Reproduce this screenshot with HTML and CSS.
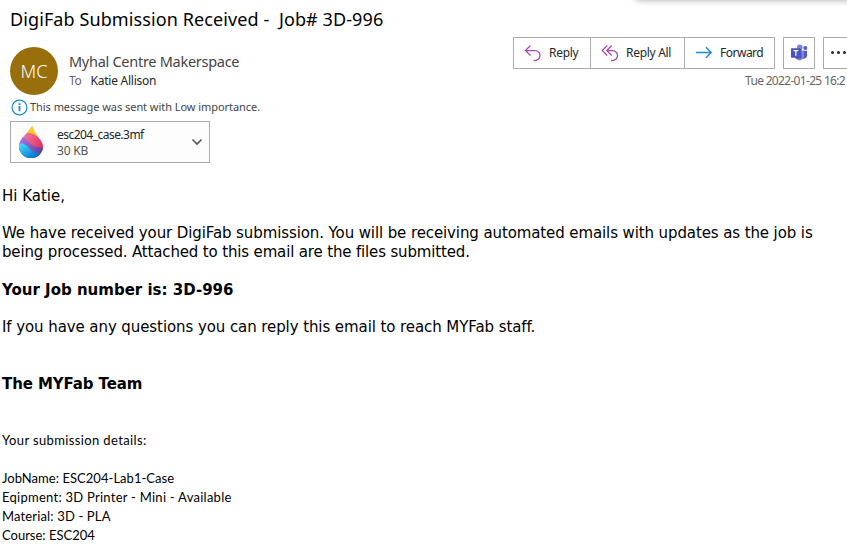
FILE: index.html
```html
<!DOCTYPE html>
<html lang="en">
<head>
<meta charset="utf-8">
<title>DigiFab Submission Received</title>
<link rel="stylesheet" href="styles.css">
</head>
<body>
<div class="top-shadow"></div>
<main class="message">
  <h1 class="subject"><span>DigiFab Submission Received -&nbsp; Job# 3D-996</span></h1>
  <header class="header">
    <div class="sender">
      <div class="avatar">MC</div>
      <div class="people">
        <div class="from"><span>Myhal Centre Makerspace</span></div>
        <div class="to"><span class="to-label">To</span><span class="to-name">Katie Allison</span></div>
      </div>
    </div>
    <div class="side">
      <div class="actions">
        <div class="group">
          <button class="btn reply"><svg width="18" height="18" viewBox="0 0 18 18" fill="none" stroke="#ac46b3" stroke-width="1.25"><path d="M6.5 1.500 1.500 6.500l5 5M1.800 6.500H11a5 5 0 0 1 0 10H9.500"/></svg><span>Reply</span></button>
          <button class="btn reply-all"><svg width="18" height="18" viewBox="0 0 18 18" fill="none" stroke="#ac46b3" stroke-width="1.25"><path d="M6.3 1.500 1.300 6.500l5 5M10.700 1.500l-5 5 5 5M6 6.500h5.500a5 5 0 0 1 0 10H10"/></svg><span>Reply All</span></button>
          <button class="btn forward"><svg width="18" height="18" viewBox="0 0 18 18" fill="none" stroke="#1e8bcd" stroke-width="1.4"><path d="M1 8.500h15M11 3.200 16.200 8.500 11 13.800"/></svg><span>Forward</span></button>
        </div>
        <button class="btn square" aria-label="Share to Teams"><svg width="18" height="18" viewBox="0 0 18 18"><circle cx="15.3" cy="4" r="2" fill="#5059c9"/><path d="M11 6.700h6v5a3 3 0 0 1-4.500 2.500z" fill="#5059c9"/><circle cx="9.800" cy="3.400" r="2.800" fill="#7b83eb"/><path d="M5 6.700h9v5.200a4.500 4.500 0 0 1-9 0z" fill="#7b83eb"/><path d="M5 5h6.500v9.500H5.400z" fill="#353c91" opacity=".65"/><rect x="1" y="4.200" width="9.600" height="9.600" rx=".8" fill="#4b53bc"/><path d="M3.500 6.600h4.800M5.900 6.600v5.200" stroke="#fff" stroke-width="1.200"/></svg></button>
        <button class="btn square" aria-label="More"><svg width="18" height="18" viewBox="0 0 18 18" fill="#262626"><circle cx="2.500" cy="8.500" r="1.500"/><circle cx="8.500" cy="8.500" r="1.500"/><circle cx="14.500" cy="8.500" r="1.500"/></svg></button>
      </div>
      <div class="date"><span>Tue 2022-01-25 16:2</span></div>
    </div>
  </header>
  <div class="notice">
    <svg width="17" height="17" viewBox="0 0 17 17"><circle cx="8.500" cy="8.500" r="7.400" fill="#fff" stroke="#1e8bcd" stroke-width="1.200"/><path d="M8.500 7v5.200M8.500 4.300v1.800" stroke="#1e8bcd" stroke-width="1.800"/></svg>
    <span>This message was sent with Low importance.</span>
  </div>
  <div class="attachment">
    <svg class="drop" width="26" height="34" viewBox="0 0 26 34">
      <defs>
        <linearGradient id="blue" x1="0" y1="0" x2="1" y2="1"><stop offset="0" stop-color="#50e6ff"/><stop offset=".75" stop-color="#0078d4"/></linearGradient>
        <linearGradient id="pink" x1="0" y1="0" x2="1" y2=".6"><stop offset=".25" stop-color="#ed7eaa"/><stop offset="1" stop-color="#e62b58"/></linearGradient>
        <linearGradient id="violet" x1="0" y1="0" x2="1" y2=".6"><stop offset=".2" stop-color="#a070dc"/><stop offset="1" stop-color="#56419c"/></linearGradient>
        <clipPath id="shape"><path d="M14.200 1C11.500 7 1 13 1 21.500a12 11.500 0 0 0 24 0C25 14.500 16.500 11 14.200 1z"/></clipPath>
      </defs>
      <g clip-path="url(#shape)">
        <path fill="url(#pink)" d="M0 0h26v34H0z"/>
        <path fill="#ffce09" d="M9 0h8l3 12C16 9 13 7.500 9 8z"/>
        <path fill="url(#violet)" d="M0 12C6 10.500 9 15 13 19s8 2.500 13 4V34H0z"/>
        <path fill="url(#blue)" d="M0 18.500C6 18 9 20 12 24s7 4 13 5V34H0z"/>
      </g>
    </svg>
    <div class="file"><div class="file-name"><span>esc204_case.3mf</span></div><div class="file-size"><span>30 KB</span></div></div>
    <svg class="chevron" width="12" height="8" viewBox="0 0 12 8" fill="none" stroke="#555" stroke-width="1.600"><path d="m1.500 1.500 4.500 4.500 4.500-4.500"/></svg>
  </div>
  <article class="body">
    <p><span>Hi Katie,</span></p>
    <p class="intro"><span>We have received your DigiFab submission. You will be receiving automated emails with updates as the job is</span><br><span class="intro-end">being processed. Attached to this email are the files submitted.</span></p>
    <p class="strong"><span>Your Job number is: 3D-996</span></p>
    <p class="contact"><span>If you have any questions you can reply this email to reach MYFab staff.</span></p>
    <p class="strong team"><span>The MYFab Team</span></p>
    <div class="details">
      <div class="details-title"><span>Your submission details:</span></div>
      <div class="job"><span>JobName: ESC204-Lab1-Case</span></div>
      <div class="equipment"><span>Eqipment: 3D Printer - Mini - Available</span></div>
      <div class="material"><span>Material: 3D - PLA</span></div>
      <div class="course"><span>Course: ESC204</span></div>
    </div>
  </article>
</main>
</body>
</html>
```
FILE: styles.css
```css
* { box-sizing: border-box; }
html, body { margin: 0; background: #fff; overflow: hidden; }
body { width: 847px; height: 560px; font-family: "Noto Sans", sans-serif; color: #262626; }
.top-shadow { position: absolute; left: 634px; top: -10px; width: 230px; height: 10px; border-radius: 8px; box-shadow: 0 0 6px rgba(0, 0, 0, .35); }
.message { white-space: nowrap; }
.subject { margin: 0; height: 37px; padding: 6px 0 0 10px; font-size: 18px; line-height: 26px; font-weight: 400; color: #000; letter-spacing: .1px; }
.header { display: flex; height: 60px; }
.sender { display: flex; width: 513px; padding: 10px 0 0 10px; }
.avatar { width: 48px; height: 48px; border-radius: 50%; background: #986f0b; color: #fff; font-size: 18px; font-weight: 300; line-height: 49px; text-align: center; }
.people { padding: 4px 0 0 11px; }
.from { font-size: 14.500px; line-height: 20px; color: #444; letter-spacing: -.28px; }
.to { display: flex; gap: 9px; padding-top: 1px; font-size: 12px; line-height: 18px; letter-spacing: -.25px; }
.to-label { color: #666; }
.side { width: 334px; overflow: hidden; }
.actions { display: flex; gap: 8px; width: 342px; }
.group { display: flex; width: 262px; border: 1px solid #ababab; }
.btn { display: flex; align-items: center; height: 30px; padding: 0; border: 0; background: #fff; font: 12px/18px "Noto Sans", sans-serif; color: #262626; letter-spacing: -.3px; }
.btn svg { flex: none; }
.group .btn { gap: 7px; padding-left: 10px; }
.reply { width: 77px; border-right: 1px solid #ababab; }
.reply-all { width: 94px; border-right: 1px solid #ababab; }
.forward { width: 89px; }
.group .forward { letter-spacing: -.5px; }
.btn.square { width: 32px; height: 32px; border: 1px solid #ababab; justify-content: center; }
.date { padding-left: 232px; padding-top: 3px; font-size: 12px; line-height: 18px; color: #666; letter-spacing: -.68px; }
.notice { display: flex; align-items: center; gap: 2px; height: 20px; padding-left: 11px; font-size: 11px; line-height: 16px; color: #444; letter-spacing: -.05px; }
.notice span { margin-bottom: 1px; }
.attachment { display: flex; align-items: center; width: 200px; height: 42px; margin: 4px 0 0 10px; border: 1px solid #ababab; background: #fdfdfd; }
.drop { margin-left: 7px; }
.file { width: 134px; margin-left: 13px; padding-top: 2px; font-size: 12px; line-height: 16px; letter-spacing: -.2px; }
.file-name { letter-spacing: -.53px; }
.file-size { color: #555; }
.body { padding: 24px 0 0 2px; font-family: "DejaVu Sans", Verdana, sans-serif; font-size: 15px; line-height: 19px; color: #000; }
.body p { margin: 0 0 18px; }
.body .intro { margin-bottom: 19px; letter-spacing: -.105px; }
.intro-end { letter-spacing: -.155px; }
.contact { letter-spacing: -.085px; }
.body .strong { font-weight: 700; }
.body .team { margin: 38px 0 0; letter-spacing: -.1px; }
.details { padding-top: 37px; font-family: Lato, sans-serif; font-size: 13px; }
.details-title { margin-bottom: 19px; letter-spacing: .37px; }
.job { letter-spacing: .04px; }
.equipment { letter-spacing: .26px; }
.material { letter-spacing: .15px; }
```
